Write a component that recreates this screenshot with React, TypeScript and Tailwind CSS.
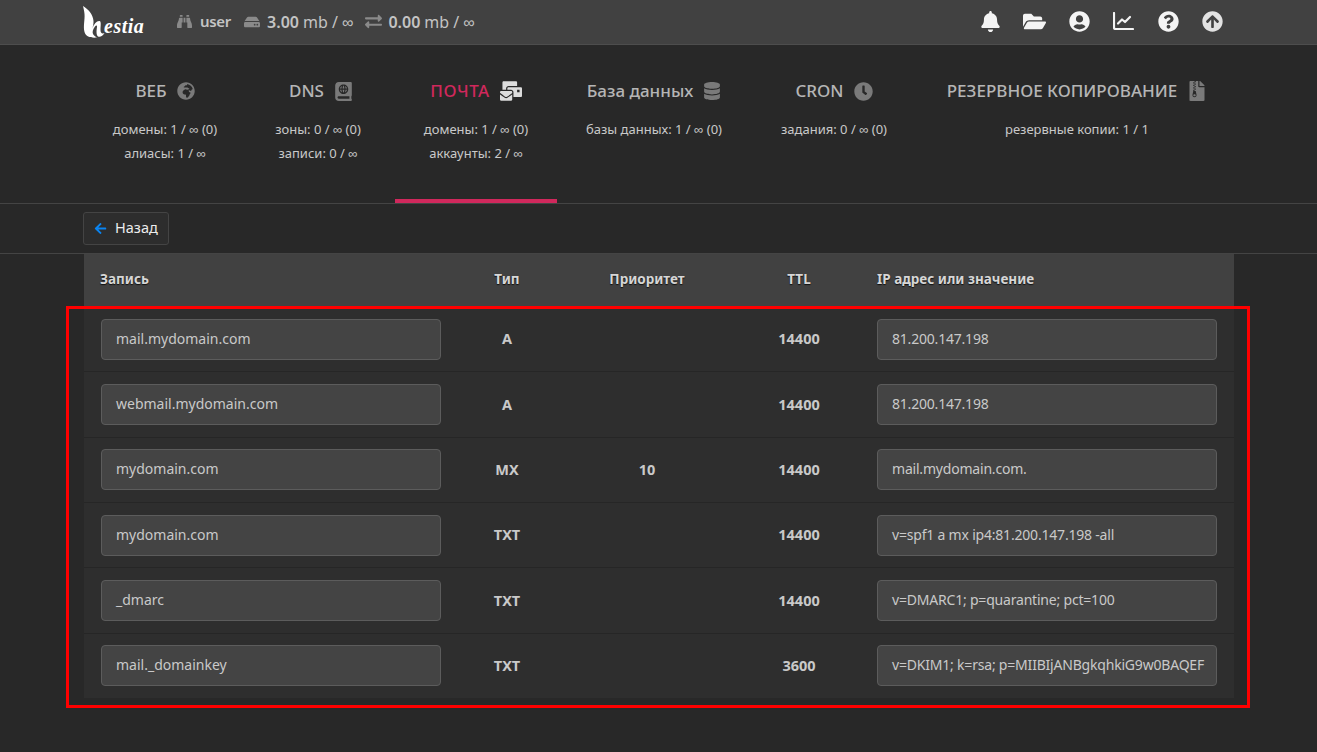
import { FaBell, FaFolderOpen, FaUserCircle, FaQuestionCircle, FaArrowCircleUp, FaBinoculars, FaHdd, FaExchangeAlt, FaGlobeAfrica, FaAtlas, FaMailBulk, FaDatabase, FaClock, FaFileArchive, FaArrowLeft } from 'react-icons/fa';
import type { IconType } from 'react-icons';

const tabs: { title: string; Icon: IconType; iconClass: string; titleClass?: string; lines: string[]; width: string; active?: boolean }[] = [
  { title: 'ВЕБ', Icon: FaGlobeAfrica, iconClass: 'text-[18px]', lines: ['домены: 1 / ∞ (0)', 'алиасы: 1 / ∞'], width: 'w-[152px]' },
  { title: 'DNS', Icon: FaAtlas, iconClass: 'text-[19px]', titleClass: 'ml-[6px]', lines: ['зоны: 0 / ∞ (0)', 'записи: 0 / ∞'], width: 'w-[154px]' },
  { title: 'ПОЧТА', Icon: FaMailBulk, iconClass: 'text-[22px]', titleClass: 'tracking-[0.5px]', lines: ['домены: 1 / ∞ (0)', 'аккаунты: 2 / ∞'], width: 'w-[162px]', active: true },
  { title: 'База данных', Icon: FaDatabase, iconClass: 'text-[18px]', lines: ['базы данных: 1 / ∞ (0)'], width: 'w-[194px]' },
  { title: 'CRON', Icon: FaClock, iconClass: 'text-[19px]', lines: ['задания: 0 / ∞ (0)'], width: 'w-[166px]' },
  { title: 'РЕЗЕРВНОЕ КОПИРОВАНИЕ', Icon: FaFileArchive, iconClass: 'text-[20px]', lines: ['резервные копии: 1 / 1'], width: 'w-[320px]' },
];

const rows = [
  { record: 'mail.mydomain.com', type: 'A', priority: '', ttl: '14400', value: '81.200.147.198' },
  { record: 'webmail.mydomain.com', type: 'A', priority: '', ttl: '14400', value: '81.200.147.198' },
  { record: 'mydomain.com', type: 'MX', priority: '10', ttl: '14400', value: 'mail.mydomain.com.' },
  { record: 'mydomain.com', type: 'TXT', priority: '', ttl: '14400', value: 'v=spf1 a mx ip4:81.200.147.198 -all' },
  { record: '_dmarc', type: 'TXT', priority: '', ttl: '14400', value: 'v=DMARC1; p=quarantine; pct=100' },
  { record: 'mail._domainkey', type: 'TXT', priority: '', ttl: '3600', value: 'v=DKIM1; k=rsa; p=MIIBIjANBgkqhkiG9w0BAQEF' },
];

const gridCols = 'grid grid-cols-[376px_94px_186px_118px_1fr] items-center';

function Logo() {
  return (
    <div className="w-[72px] h-[45px] flex items-start text-white">
      <svg width="28" height="40" viewBox="0 0 28 40" className="shrink-0">
        <path d="M5 6 C10 9 15 14 15.5 21 C15.6 24 15 26 14.5 28 C16 24 19 20.5 21.5 21 C23.5 21.5 22.5 26 22.5 30 C22.5 33 24 34 26.5 33 C25 36 22 37.5 20 36.5 C18 35 18.5 30 19 27 C19.2 25 18 25 17 26.5 C15 29 14 32 15 34 C16 36 18 37 19 37.5 C14 38 8 37.5 6.5 32 C5 26 7 20 6.5 14 C6.3 11 5.5 8 5 6 Z" fill="currentColor" />
      </svg>
      <span className="mt-[13px] -ml-[2px] italic font-bold text-[20px] leading-[26px] font-['Liberation_Serif',serif] tracking-[0.5px]">estia</span>
    </div>
  );
}

function ChartIcon() {
  return (
    <svg width="21" height="18" viewBox="0 0 21 18" fill="none" stroke="currentColor" strokeWidth="2.2" strokeLinecap="round" strokeLinejoin="round">
      <path d="M1 1 V15.5 a1.5 1.5 0 0 0 1.5 1.5 H20" />
      <path d="M5 11.5 L9 7.5 L12 10 L17 5" />
    </svg>
  );
}

function Field({ value, tight }: { value: string; tight?: boolean }) {
  return (
    <div className={`w-[340px] h-[41px] px-[14px] pb-[2px] flex items-center rounded-[4px] border border-[#5c5c5c] bg-[#444444] text-[14px] font-normal text-[#c9c9c9] whitespace-nowrap ${tight ? 'tracking-[-0.2px]' : ''}`}>
      {value}
    </div>
  );
}

export default function App() {
  return (
    <div className="relative min-h-[752px] bg-[#282828] font-['Noto_Sans',sans-serif] text-[#c9c9c9] overflow-hidden">
      {/* Top bar */}
      <div className="h-[45px] bg-[#414141] border-b border-[#4d4d4d] pl-[78px] pr-[82px] flex items-center">
        <Logo />
        <div className="ml-[27px] -mt-[1px] flex items-center text-[16px] text-[#c4c4c4]">
          <FaBinoculars className="text-[#8a8a8a] text-[15px] mr-[8px]" />
          <b className="font-semibold text-[15px] tracking-[-0.3px]">user</b>
          <FaHdd className="ml-[13px] mr-[7px] text-[#8a8a8a] text-[16px]" />
          <b className="font-semibold">3.00</b>
          <span className="ml-[4px]">mb / ∞</span>
          <FaExchangeAlt className="ml-[12px] mr-[6px] text-[#8a8a8a] text-[17px]" />
          <b className="font-semibold">0.00</b>
          <span className="ml-[4px]">mb / ∞</span>
        </div>
        <div className="ml-auto -mt-[2px] flex items-center text-[#f4f4f4] text-[21px]">
          <span className="w-[44.5px] flex justify-center"><FaBell /></span>
          <span className="w-[44.5px] flex justify-center"><FaFolderOpen className="text-[23px]" /></span>
          <span className="w-[44.5px] flex justify-center"><FaUserCircle /></span>
          <span className="w-[44.5px] flex justify-center"><ChartIcon /></span>
          <span className="w-[44.5px] flex justify-center"><FaQuestionCircle /></span>
          <span className="w-[44.5px] flex justify-center text-[#e2e2e2]"><FaArrowCircleUp /></span>
        </div>
      </div>

      {/* Section tabs */}
      <div className="h-[159px] border-b border-[#444444] pl-[89px] flex">
        {tabs.map(({ title, Icon, iconClass, titleClass, lines, width, active }) => (
          <div key={title} className={`${width} h-[158px] pt-[33px] flex flex-col items-center border-b-[4px] ${active ? 'border-[#d0285c]' : 'border-transparent'}`}>
            <div className={`h-[26px] flex items-center gap-[10px] text-[17px] font-medium whitespace-nowrap ${titleClass ?? ''} ${active ? 'text-[#d0285c]' : 'text-[#b5b5b5]'}`}>
              {title}
              <Icon className={`${iconClass} ${active ? 'text-[#dcdcdc]' : 'text-[#7a7a7a]'}`} />
            </div>
            <div className="mt-[13px] text-[13px] leading-[24px] text-[#c9c9c9] text-center whitespace-nowrap">
              {lines.map((line) => <div key={line}>{line}</div>)}
            </div>
          </div>
        ))}
      </div>

      {/* Toolbar */}
      <div className="h-[50px] border-b border-[#444444] pl-[83px] flex items-center">
        <button className="h-[33px] w-[86px] pl-[10px] pb-[1px] flex items-center gap-[8px] rounded-[3px] border border-[#444444] bg-[#2d2d2d] text-[14.5px] text-[#ececec]">
          <FaArrowLeft className="text-[#0a84f0] text-[13px]" />
          Назад
        </button>
      </div>

      {/* Records table */}
      <div className="w-[1150px] ml-[84px] bg-[#2e2e2e]">
        <div className={`h-[52px] pb-[2px] bg-[#414141] ${gridCols} text-[13.5px] font-bold text-[#d6d6d6] [text-shadow:0_1px_1px_#111111]`}>
          <div className="pl-[16px]">Запись</div>
          <div className="text-center">Тип</div>
          <div className="text-center">Приоритет</div>
          <div className="text-center">TTL</div>
          <div className="pl-[19px]">IP адрес или значение</div>
        </div>
        {rows.map((row, i) => (
          <div key={i} className={`h-[65.33px] border-t border-[#262626] ${gridCols} text-[14.5px] font-bold text-[#c9c9c9]`}>
            <div className="pl-[17px]"><Field value={row.record} /></div>
            <div className="text-center">{row.type}</div>
            <div className="text-center">{row.priority}</div>
            <div className="text-center">{row.ttl}</div>
            <div className="pl-[19px]"><Field value={row.value} tight /></div>
          </div>
        ))}
      </div>

      {/* Annotation frame drawn over the screenshot */}
      <div className="absolute left-[66px] top-[306px] w-[1184px] h-[402px] border-[3px] border-[#ff0000] pointer-events-none" />
    </div>
  );
}
